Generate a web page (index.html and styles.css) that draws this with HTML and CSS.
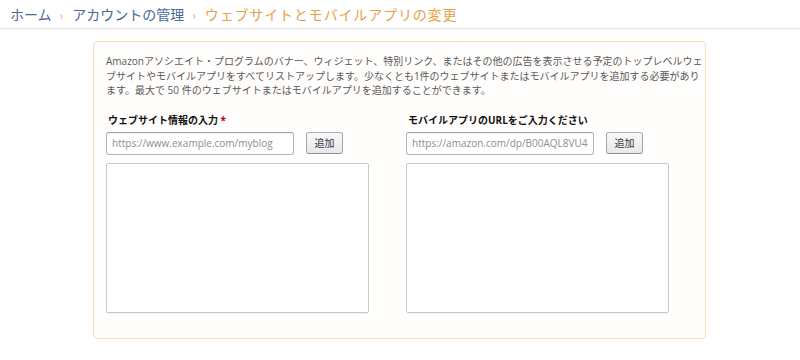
FILE: index.html
```html
<!DOCTYPE html>
<html lang="ja">
<head>
<meta charset="utf-8">
<title>ウェブサイトとモバイルアプリの変更</title>
<link rel="stylesheet" href="styles.css">
</head>
<body>
<nav class="crumbs">
  <a class="crumb-link" href="#">ホーム</a>
  <span class="sep">›</span>
  <a class="crumb-link" href="#">アカウントの管理</a>
  <span class="sep">›</span>
  <span class="crumb-current">ウェブサイトとモバイルアプリの変更</span>
</nav>
<main class="panel">
  <p class="intro">Amazonアソシエイト・プログラムのバナー、ウィジェット、特別リンク、またはその他の広告を表示させる予定のトップレベルウェブサイトやモバイルアプリをすべてリストアップします。少なくとも1件のウェブサイトまたはモバイルアプリを追加する必要があります。最大で 50 件のウェブサイトまたはモバイルアプリを追加することができます。</p>
  <div class="cols">
    <section class="col">
      <label class="label">ウェブサイト情報の入力 <span class="req">*</span></label>
      <div class="row">
        <input class="field" type="text" placeholder="https://www.example.com/myblog">
        <button class="btn" type="button">追加</button>
      </div>
      <textarea class="list"></textarea>
    </section>
    <section class="col">
      <label class="label">モバイルアプリのURLをご入力ください</label>
      <div class="row">
        <input class="field" type="text" placeholder="https://amazon.com/dp/B00AQL8VU4">
        <button class="btn" type="button">追加</button>
      </div>
      <textarea class="list"></textarea>
    </section>
  </div>
</main>
</body>
</html>
```
FILE: styles.css
```css
html, body {
  margin: 0;
  padding: 0;
  background: #ffffff;
  font-family: "Open Sans", "Noto Sans CJK JP", sans-serif;
}

.crumbs {
  height: 28px;
  display: flex;
  align-items: center;
  padding-left: 10px;
  border-bottom: 1px solid #e6e6e6;
  font-size: 14px;
  font-family: "Noto Sans CJK JP", sans-serif;
  box-shadow: 0 1px 1px rgba(0,0,0,0.03);
}

.crumb-link {
  color: #4a6898;
  text-decoration: none;
}

.sep {
  color: #b0b0b0;
  font-size: 12px;
  margin: 0 9px 0 8px;
}

.crumb-current {
  color: #e8a04c;
  letter-spacing: 0.85px;
}

.panel {
  margin: 12px 0 0 93px;
  width: 613px;
  height: 298px;
  box-sizing: border-box;
  border: 1px solid #f8dfbd;
  border-radius: 4px;
  background: #fffefc;
  padding: 12px 0 0 12px;
}

.intro {
  margin: 0;
  width: 597px;
  font-size: 10px;
  line-height: 14.5px;
  color: #595959;
}

.cols {
  display: grid;
  grid-template-columns: 300px 300px;
  margin-top: 15px;
}

.col {
  display: flex;
  flex-direction: column;
}

.label {
  font-size: 10px;
  font-weight: bold;
  color: #111111;
  line-height: 14px;
  padding-left: 2px;
  margin-bottom: 5px;
}

.req {
  color: #c40000;
}

.row {
  display: flex;
  gap: 12px;
  align-items: flex-start;
}

.field {
  width: 188px;
  height: 23px;
  box-sizing: border-box;
  border: 1px solid #b5b5b5;
  border-top-color: #a6a6a6;
  border-radius: 3px;
  box-shadow: inset 0 1px 0 rgba(0,0,0,0.05);
  padding: 0 5px;
  font-family: "Open Sans", sans-serif;
  font-size: 10px;
  color: #333;
  background: #fff;
}

.field::placeholder {
  color: #8d8d8d;
}

.btn {
  width: 37px;
  height: 22px;
  box-sizing: border-box;
  border: 1px solid #adb1b8;
  border-color: #adb1b8 #a2a6ac #8d9096;
  border-radius: 3px;
  background: linear-gradient(to bottom, #f7f8fa, #e7e9ec);
  font-family: "Noto Sans CJK JP", sans-serif;
  font-size: 10px;
  color: #333;
  padding: 0;
}

.list {
  margin-top: 8px;
  width: 263px;
  height: 150px;
  box-sizing: border-box;
  border: 1px solid #c9c9c9;
  border-radius: 2px;
  box-shadow: 0 1px 0 rgba(0,0,0,0.04);
  background: #fff;
  resize: none;
  padding: 0;
}
```
